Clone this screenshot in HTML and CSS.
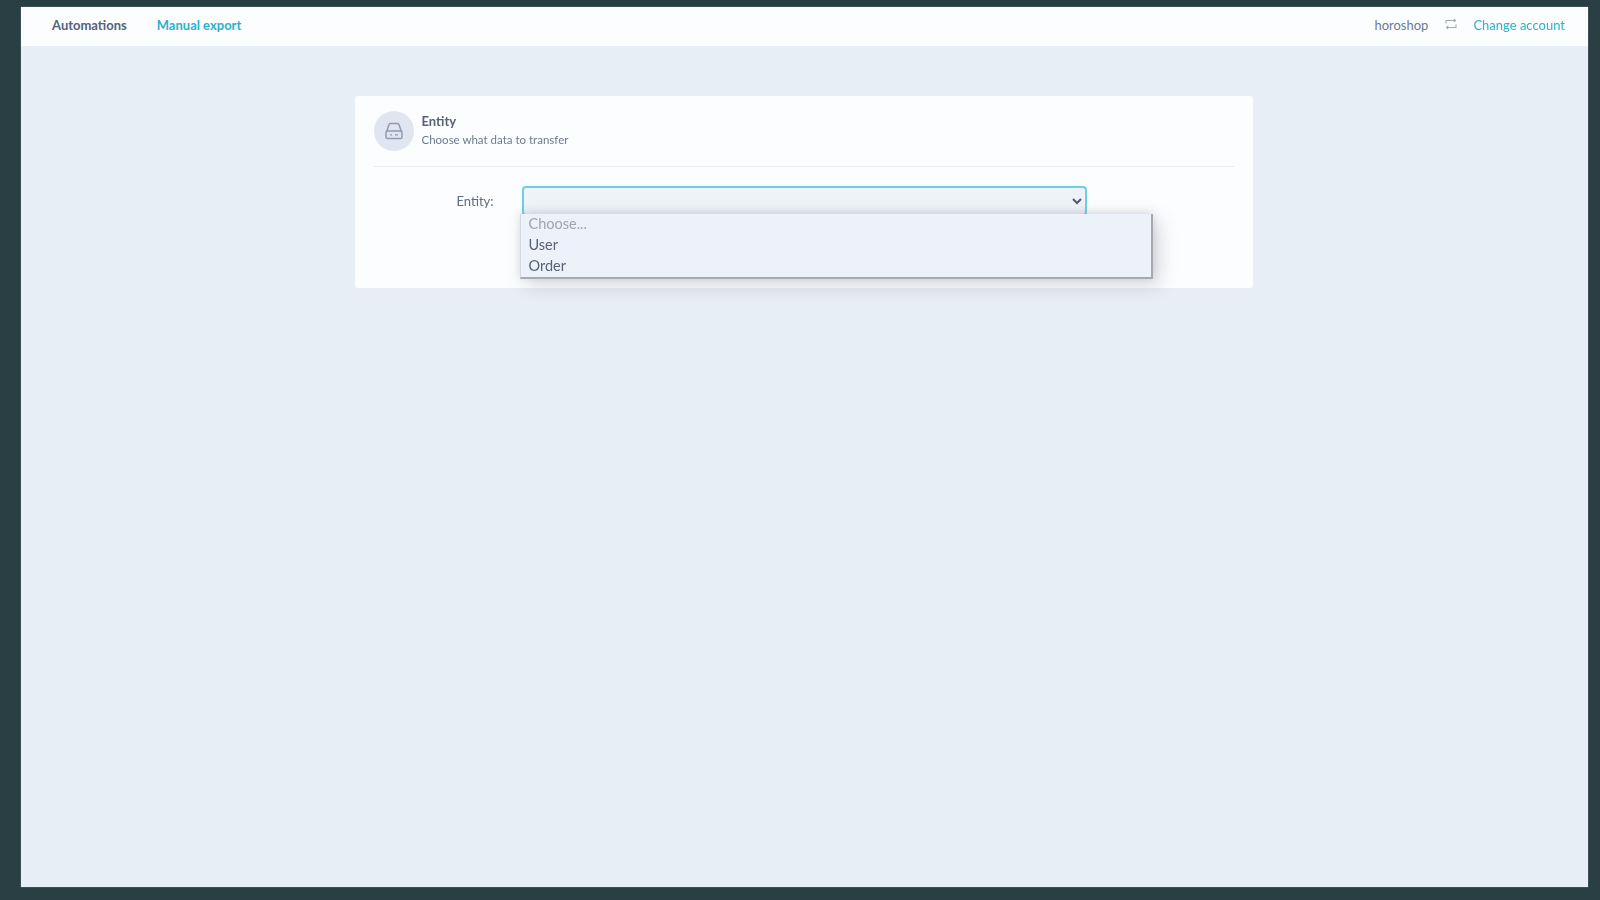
FILE: index.html
```html
<!DOCTYPE html>
<html lang="en">
<head>
<meta charset="utf-8">
<title>Manual export</title>
<link rel="stylesheet" href="styles.css">
</head>
<body>
<div class="frame">
  <header class="nav">
    <div class="nav-left">
      <a class="nav-link strong">Automations</a>
      <a class="nav-link accent strong">Manual export</a>
    </div>
    <div class="nav-right">
      <span class="account">horoshop</span>
      <svg class="swap" viewBox="0 0 12 12" width="12" height="12" fill="none" stroke="#a3acba" stroke-width="1.1"><path d="M1 5.500V2.500H10.500M8.800 .8 10.500 2.500 8.800 4.200"/><path d="M11 6.500V9.500H1.500M3.200 7.800 1.500 9.500 3.200 11.200"/></svg>
      <a class="nav-link accent">Change account</a>
    </div>
  </header>
  <main class="content">
    <section class="card">
      <div class="card-head">
        <div class="circle">
          <svg viewBox="0 0 20 20" width="20" height="20" fill="none" stroke="#8f9bb0" stroke-width="1.5"><path d="M2.500 11 5 3.500Q5.300 2.500 6.500 2.500H13.500Q14.700 2.500 15 3.500L17.500 11"/><rect x="2" y="10" width="16" height="7.500" rx="1.500"/><path d="M6 13.800H8M11 13.800H14" stroke-width="1.200"/></svg>
        </div>
        <div class="head-text">
          <div class="title">Entity</div>
          <div class="subtitle">Choose what data to transfer</div>
        </div>
      </div>
      <div class="form-row">
        <label class="label" for="entity">Entity:</label>
        <div class="select-wrap">
          <select class="select" id="entity"><option></option></select>
          <ul class="menu">
            <li class="item muted">Choose...</li>
            <li class="item">User</li>
            <li class="item">Order</li>
          </ul>
        </div>
      </div>
    </section>
  </main>
</div>
</body>
</html>
```

FILE: styles.css
```css
* { box-sizing: border-box; }
html, body { margin: 0; height: 100%; }
body {
  background: #2a3f44;
  padding: 7px 12px 13px 21px;
  font-family: "Lato", "Noto Sans", sans-serif;
  color: #4d5a70;
  overflow: hidden;
}
.frame {
  height: 100%;
  background: #e8eef6;
  display: flex;
  flex-direction: column;
  box-shadow: 0 0 1px #9aa5ad;
  filter: blur(.4px);
}
.nav {
  height: 39px;
  flex: none;
  background: #fcfdff;
  display: flex;
  align-items: center;
  justify-content: space-between;
  padding: 0 23px 3px 31px;
  font-size: 13px;
}
.nav-left { display: flex; gap: 30px; }
.nav-right { display: flex; align-items: center; }
.nav-link { color: #556278; }
.strong { font-weight: 700; }
.accent { color: #2cb1cc; }
.account { color: #6c7a90; margin-right: 17px; }
.swap { margin-right: 16px; margin-top: -3px; }
.content {
  flex: 1;
  display: flex;
  justify-content: center;
  align-items: flex-start;
  padding: 50px 2px 0 0;
}
.card {
  width: 898px;
  height: 192px;
  background: #fcfdff;
  border-radius: 3px;
  padding: 15px 19px;
}
.card-head {
  display: flex;
  gap: 8px;
  height: 56px;
  border-bottom: 1px solid #e8edf3;
}
.circle {
  width: 40px;
  height: 40px;
  border-radius: 50%;
  background: #dfe6f2;
  display: flex;
  align-items: center;
  justify-content: center;
}
.head-text { padding-top: 1px; }
.title { font-size: 13px; font-weight: 700; line-height: 18px; color: #556278; }
.subtitle { font-size: 11.500px; line-height: 19px; color: #6c7a90; }
.form-row {
  display: flex;
  align-items: flex-start;
  margin-top: 19px;
}
.label {
  width: 148px;
  padding: 7px 28px 0 0;
  text-align: right;
  font-size: 13px;
  line-height: 16px;
  color: #5e6b80;
}
.select-wrap { position: relative; width: 565px; }
.select {
  display: block;
  width: 100%;
  height: 30px;
  background: #eef2f9;
  border: 2px solid #6fcfe0;
  border-radius: 4px;
  outline: none;
  color: #4d5a70;
}
.menu {
  position: absolute;
  top: 28px;
  left: -2px;
  width: 633px;
  height: 65px;
  margin: 0;
  padding: 0 8px;
  list-style: none;
  background: #edf1f9;
  border-right: 2px solid #a8a9b0;
  border-bottom: 2px solid #a8a9b0;
  border-left: 1px solid #d5d8e0;
  box-shadow: 6px 6px 18px rgba(60, 60, 70, .2), 0 -2px 8px rgba(60, 60, 70, .12);
}
.item { font-size: 14.500px; line-height: 21px; color: #556278; }
.muted { color: #a0a5ad; margin-top: -1px; }
```
